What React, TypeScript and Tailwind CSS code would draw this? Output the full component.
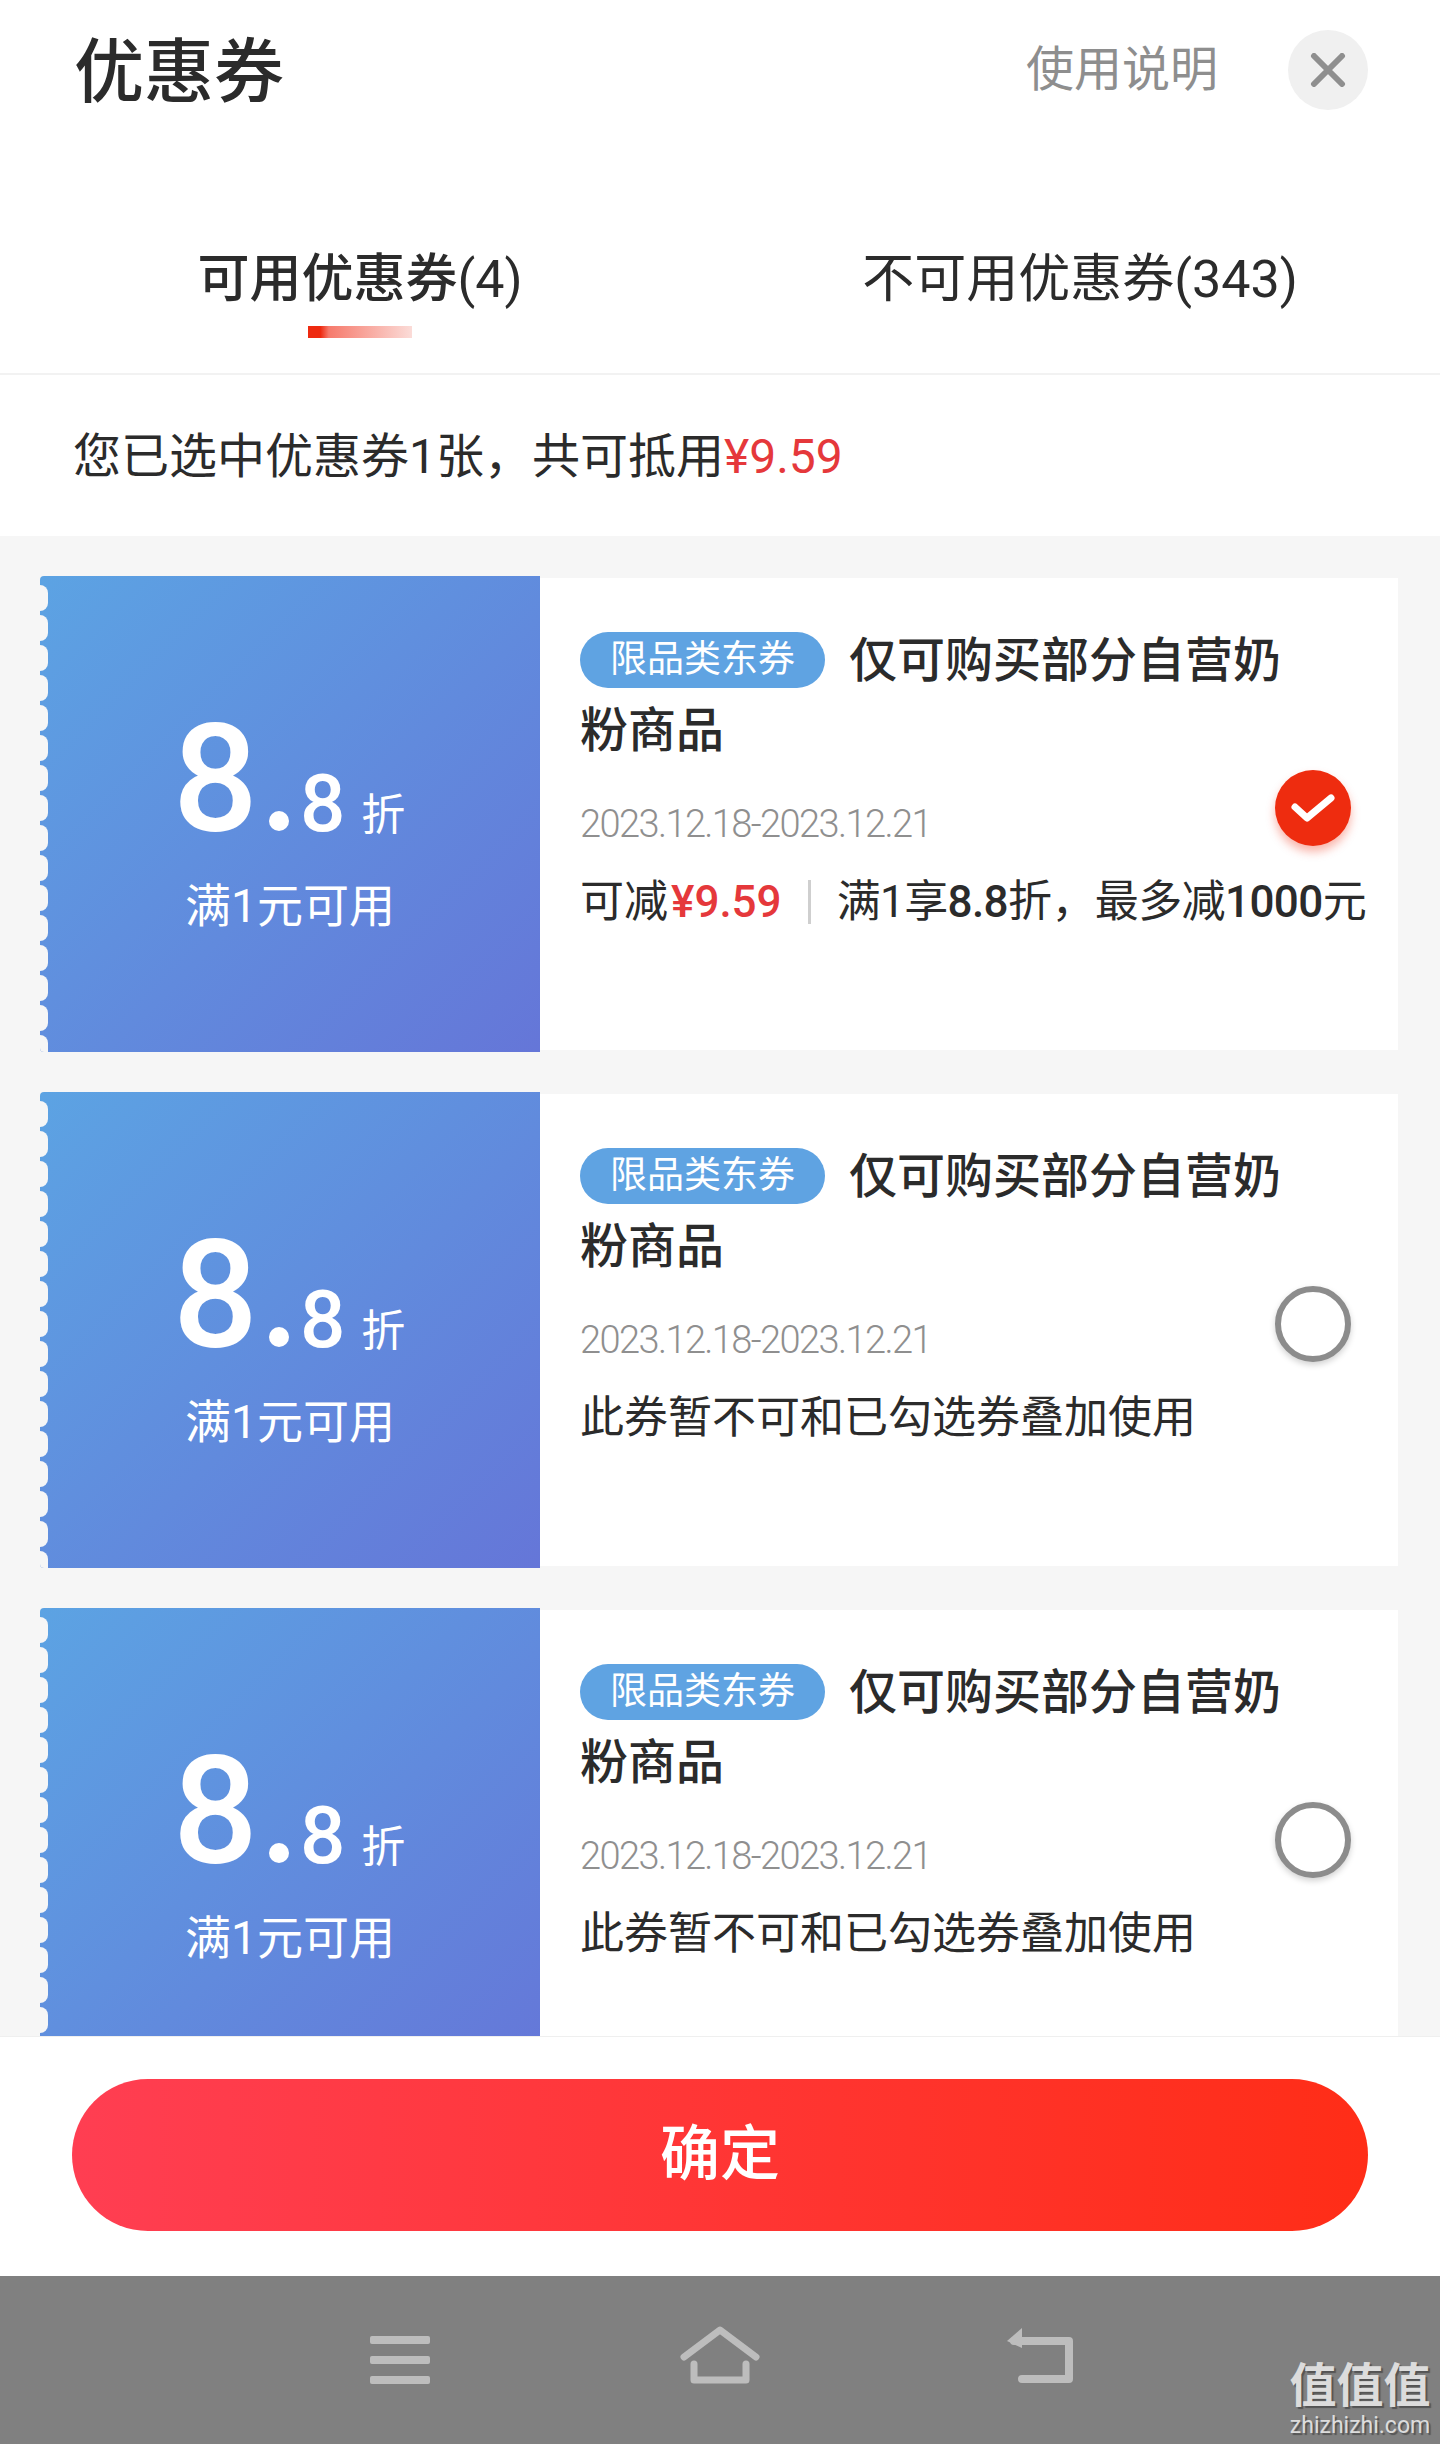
import React from 'react';

const FONT = 'font-[Roboto,"Noto_Sans_CJK_SC",sans-serif]';
const BUMPS = Array.from({ length: 16 }, (_, i) => i);

function CheckMark({ checked }: { checked: boolean }) {
  if (!checked) {
    return (
      <div className="w-[76px] h-[76px] rounded-full bg-white border-[6px] border-[#8c8c8c] shadow-[0_3px_6px_rgba(0,0,0,0.18)]" />
    );
  }
  return (
    <div className="w-[76px] h-[76px] rounded-full bg-[#ee2c0f] shadow-[0_6px_10px_rgba(238,44,15,0.35)] flex items-center justify-center">
      <svg width="46" height="30" viewBox="0 0 46 30" fill="none">
        <path d="M5 14 L17 25 L41 5" stroke="white" strokeWidth="7" strokeLinecap="round" strokeLinejoin="round" />
      </svg>
    </div>
  );
}

function Coupon({ checked, note }: { checked: boolean; note?: string }) {
  return (
    <div className="flex h-[476px] shrink-0">
      {/* Left blue ticket stub */}
      <div className="relative w-[500px] shrink-0 overflow-hidden rounded-l-[4px] bg-[linear-gradient(135deg,#5ca3e3,#6576d8)] text-white flex flex-col items-center pt-[134px]">
        <div className="flex flex-col gap-[4px] absolute left-[-8px] top-[9px]">
          {BUMPS.map((i) => (
            <div key={i} className="w-[16px] h-[26px] rounded-full bg-[#f6f6f6]" />
          ))}
        </div>
        <div className="flex items-baseline h-[140px] leading-[140px] ml-[-2px]">
          <span className="text-[150px] font-medium">8</span>
          <span className="w-[20px] h-[20px] rounded-full bg-white mx-[11px]" />
          <span className="text-[80px] font-medium">8</span>
          <span className="text-[44px] ml-[16px]">折</span>
        </div>
        <div className="text-[46px] leading-[60px] mt-[26px]">满1元可用</div>
      </div>

      {/* Right details */}
      <div className="relative flex-1 bg-white my-[2px] pl-[40px] pt-[48px]">
        <div className="w-[740px] text-[48px] leading-[70px] font-medium text-[#2b2b2b]">
          <span className="inline-flex items-center justify-center w-[245px] h-[56px] rounded-full bg-[#5fa3e2] text-white text-[37px] leading-[56px] font-normal align-[5px] mr-[24px]">
            限品类东券
          </span>
          仅可购买部分自营奶粉商品
        </div>
        <div className="mt-[33px] text-[38px] leading-[50px] tracking-[-1.6px] font-light text-[#8f8f8f]">
          2023.12.18-2023.12.21
        </div>
        {note ? (
          <div className="mt-[25px] text-[44px] leading-[56px] text-[#2b2b2b]">{note}</div>
        ) : (
          <div className="mt-[25px] flex items-center text-[44px] leading-[56px] text-[#2b2b2b]">
            <span>可减</span>
            <span className="text-[#e5383b] font-medium ml-[3px]">¥9.59</span>
            <span className="w-[3px] h-[44px] bg-[#cfcfcf] mx-[26px]" />
            <span className="tracking-[-0.6px]">
              满1享<span className="font-medium">8.8</span>折，最多减<span className="font-medium">1000</span>元
            </span>
          </div>
        )}
        <div className="absolute right-[47px] top-[192px]">
          <CheckMark checked={checked} />
        </div>
      </div>
    </div>
  );
}

export default function App() {
  return (
    <div className={`${FONT} w-[1440px] h-[2444px] flex flex-col overflow-hidden bg-white text-[#2b2b2b]`}>
      {/* Title */}
      <div className="h-[140px] shrink-0 flex items-center pl-[74px] pr-[72px]">
        <h1 className="text-[70px] leading-[80px] font-medium mt-[6px]">优惠券</h1>
        <button className="ml-auto mr-[70px] text-[48px] leading-[60px] text-[#8e8e8e]">使用说明</button>
        <button className="w-[80px] h-[80px] rounded-full bg-[#f0f0f0] flex items-center justify-center">
          <svg width="36" height="34" viewBox="0 0 36 34" fill="none">
            <path d="M4 3 L32 31 M32 3 L4 31" stroke="#8f8f8f" strokeWidth="6" strokeLinecap="round" />
          </svg>
        </button>
      </div>

      {/* Tabs */}
      <div className="h-[235px] shrink-0 flex border-b-2 border-[#f2f2f2]">
        <div className="w-[720px] flex flex-col items-center pt-[108px]">
          <div className="text-[52px] leading-[64px] font-medium">
            可用优惠券<span className="font-normal">(4)</span>
          </div>
          <div className="w-[104px] h-[12px] mt-[14px] bg-[linear-gradient(90deg,#ee2a10_12%,#f67a6c_20%,#fbdcd8)]" />
        </div>
        <div className="w-[720px] flex flex-col items-center pt-[108px]">
          <div className="text-[52px] leading-[64px]">不可用优惠券(343)</div>
        </div>
      </div>

      {/* Selected summary */}
      <div className="h-[161px] shrink-0 flex items-center pl-[73px] pt-[3px] text-[48px] leading-[60px]">
        您已选中优惠券1张，共可抵用<span className="text-[#e5383b]">¥9.59</span>
      </div>

      {/* Coupon list */}
      <div className="flex-1 min-h-0 overflow-hidden bg-[#f6f6f6] pt-[40px] pl-[40px] pr-[42px] flex flex-col gap-[40px]">
        <Coupon checked />
        <Coupon checked={false} note="此券暂不可和已勾选券叠加使用" />
        <Coupon checked={false} note="此券暂不可和已勾选券叠加使用" />
      </div>

      {/* Confirm */}
      <div className="h-[240px] shrink-0 bg-white border-t border-[#efefef] px-[72px] pt-[42px]">
        <button className="w-full h-[152px] rounded-full bg-[linear-gradient(90deg,#ff3e52,#ff2d17)] text-white text-[60px] leading-[72px] font-medium">
          确定
        </button>
      </div>

      {/* Android nav bar */}
      <div className="relative h-[168px] shrink-0 bg-[#808080] flex justify-center pt-[50px]">
        <div className="w-[320px] h-[60px] flex items-end justify-center">
          <div className="flex flex-col gap-[12px] w-[60px] mb-[2px]">
            <div className="h-[8px] rounded-[2px] bg-[#bdbdbd]" />
            <div className="h-[8px] rounded-[2px] bg-[#bdbdbd]" />
            <div className="h-[8px] rounded-[2px] bg-[#bdbdbd]" />
          </div>
        </div>
        <div className="w-[320px] h-[60px] flex items-end justify-center">
          <svg width="80" height="60" viewBox="0 0 80 60" fill="none">
            <path d="M4 31 L40 4 L76 31" stroke="#bdbdbd" strokeWidth="7" strokeLinecap="round" strokeLinejoin="round" />
            <path d="M14 38 V54 H66 V38" stroke="#bdbdbd" strokeWidth="7" strokeLinecap="round" strokeLinejoin="round" />
          </svg>
        </div>
        <div className="w-[320px] h-[60px] flex items-end justify-center">
          <svg width="68" height="60" viewBox="0 0 68 60" fill="none">
            <path d="M8 15 H63 V53 H16" stroke="#bdbdbd" strokeWidth="8" strokeLinecap="round" strokeLinejoin="round" />
            <path d="M1 15 L16 2 V22 Z" fill="#bdbdbd" />
          </svg>
        </div>
        <div className="absolute right-[10px] bottom-[6px] w-[140px] flex flex-col items-center text-[#dcdcdc] [text-shadow:2px_2px_1px_rgba(0,0,0,0.35)]">
          <div className="text-[47px] leading-[50px] font-bold whitespace-nowrap">值值值</div>
          <div className="text-[23px] leading-[24px] mt-[3px] whitespace-nowrap">zhizhizhi.com</div>
        </div>
      </div>
    </div>
  );
}
